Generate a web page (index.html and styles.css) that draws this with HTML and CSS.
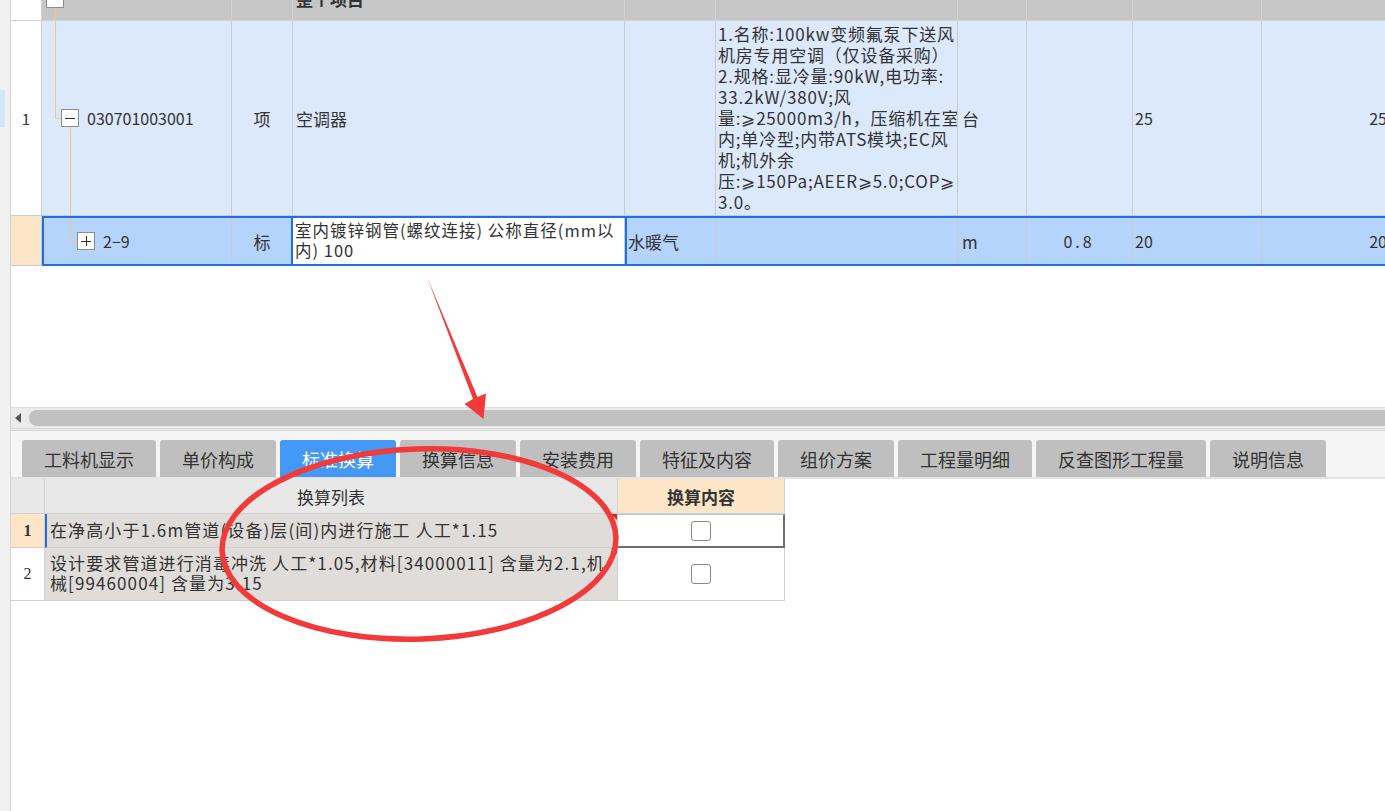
FILE: index.html
```html
<!DOCTYPE html>
<html lang="zh-CN">
<head>
    <meta charset="UTF-8">
    <meta name="viewport" content="width=device-width, initial-scale=1.0">
    <title>标准换算</title>
    <link rel="stylesheet" href="styles.css">
</head>
<body>
    <div class="side"><div class="side-mark"></div></div>

    <div class="main">
        <!-- 清单表格 -->
        <div class="sheet">
            <div class="row row-top">
                <div class="cell num"></div>
                <div class="cell code">
                    <span class="tbox minus"></span>
                </div>
                <div class="cell"></div>
                <div class="cell name bold">整个项目</div>
                <div class="cell"></div>
                <div class="cell"></div>
                <div class="cell"></div>
                <div class="cell"></div>
                <div class="cell"></div>
                <div class="cell"></div>
            </div>

            <div class="row row-item">
                <div class="cell num">1</div>
                <div class="cell code lvl1">
                    <span class="tbox minus"></span>
                    <span class="code-text">030701003001</span>
                </div>
                <div class="cell center">项</div>
                <div class="cell name">空调器</div>
                <div class="cell"></div>
                <div class="cell desc">
                    1.名称:100kw变频氟泵下送风<br>
                    机房专用空调（仅设备采购）<br>
                    2.规格:显冷量:90kW,电功率:<br>
                    33.2kW/380V;风<br>
                    量:⩾25000m3/h，压缩机在室<br>
                    内;单冷型;内带ATS模块;EC风<br>
                    机;机外余<br>
                    压:⩾150Pa;AEER⩾5.0;COP⩾<br>
                    3.0。
                </div>
                <div class="cell unit">台</div>
                <div class="cell"></div>
                <div class="cell numtext">25</div>
                <div class="cell numtext right">25</div>
            </div>

            <div class="row-sel">
                <div class="cell num peach"></div>
                <div class="sel">
                    <div class="cell code lvl2">
                        <span class="tbox plus"></span>
                        <span class="code-text">2−9</span>
                    </div>
                    <div class="cell center">标</div>
                    <div class="cell name editing">室内镀锌钢管(螺纹连接) 公称直径(mm以<br>内) 100</div>
                    <div class="cell">水暖气</div>
                    <div class="cell"></div>
                    <div class="cell unit">m</div>
                    <div class="cell numtext center spaced">0.8</div>
                    <div class="cell numtext">20</div>
                    <div class="cell numtext right">20</div>
                </div>
            </div>
        </div>

        <div class="hscroll">
            <span class="scroll-left"></span>
            <div class="thumb"></div>
        </div>

        <div class="tabs">
            <div class="tab">工料机显示</div>
            <div class="tab">单价构成</div>
            <div class="tab active">标准换算</div>
            <div class="tab">换算信息</div>
            <div class="tab">安装费用</div>
            <div class="tab">特征及内容</div>
            <div class="tab">组价方案</div>
            <div class="tab">工程量明细</div>
            <div class="tab">反查图形工程量</div>
            <div class="tab">说明信息</div>
        </div>

        <!-- 换算列表 -->
        <div class="sub">
            <div class="sub-row sub-head">
                <div class="scell snum"></div>
                <div class="scell stitle">换算列表</div>
                <div class="scell scontent">换算内容</div>
            </div>
            <div class="sub-row sr1">
                <div class="scell snum cur">1</div>
                <div class="scell stext curbar">在净高小于1.6m管道(设备)层(间)内进行施工 人工*1.15</div>
                <div class="scell scheck selected"><span class="chk"></span></div>
            </div>
            <div class="sub-row sr2">
                <div class="scell snum">2</div>
                <div class="scell stext">设计要求管道进行消毒冲洗 人工*1.05,材料[34000011] 含量为2.1,机<br>械[99460004] 含量为3.15</div>
                <div class="scell scheck"><span class="chk"></span></div>
            </div>
        </div>
    </div>

    <svg class="marks" width="1385" height="811" viewBox="0 0 1385 811">
        <polygon points="427,277 477.5,397 486,393.5 483.5,419 464.5,404 473,399" fill="#f23a3a"/>
        <ellipse cx="419" cy="544" rx="197" ry="95" fill="none" stroke="#f23a3a" stroke-width="5.5" transform="rotate(-2 419 544)"/>
    </svg>
</body>
</html>
```

FILE: styles.css
```css
* {
    box-sizing: border-box;
}

html, body {
    margin: 0;
}

body {
    width: 1385px;
    height: 811px;
    overflow: hidden;
    position: relative;
    display: flex;
    font-family: "Noto Sans CJK SC", "Microsoft YaHei", sans-serif;
    color: #333;
    background: #fff;
}

.side {
    width: 11px;
    flex: none;
    background: #f1f1f1;
    border-right: 1px solid #d4d4d4;
    padding-top: 90px;
}
.side-mark {
    width: 5px;
    height: 37px;
    background: #d2e6fb;
}

.main {
    flex: 1;
    min-width: 0;
}

/* top sheet */
.sheet {
    height: 407px;
    overflow: hidden;
}

.row {
    display: grid;
    grid-template-columns: 31px 190px 61px 332px 91px 242px 69px 106px 129px 140px;
}

.cell {
    display: flex;
    align-items: center;
    padding: 0 3px;
    font-size: 17px;
    white-space: nowrap;
    overflow: hidden;
    position: relative;
    border-right: 1px solid #c8ccd2;
    border-bottom: 1px solid #c8ccd2;
}

.row-top {
    height: 44px;
    margin-top: -23px;
    background: #c6c6c6;
}
.row-top .cell {
    border-color: #d3d3d3;
}
.row-top .num {
    background: #fff;
}
.bold {
    font-weight: bold;
}

.row-item {
    height: 195px;
    background: #dce9fc;
}
.num {
    background: #fff;
    justify-content: center;
    font-size: 15px;
}
.peach {
    background: #fde5c8;
}
.center {
    justify-content: center;
}
.unit {
    padding-left: 4px;
}
.numtext {
    font-size: 16px;
    padding-left: 2px;
}
.numtext.right {
    justify-content: flex-end;
    padding-right: 14px;
}
.numtext.center {
    justify-content: center;
}
.spaced {
    letter-spacing: 3px;
}

.desc {
    display: block;
    padding: 2px 2px;
    font-size: 17px;
    line-height: 21px;
    letter-spacing: 0.8px;
}

/* tree */
.tbox {
    width: 18px;
    height: 18px;
    flex: none;
    background: #fff;
    border: 1px solid #8d8d8d;
    position: relative;
}
.tbox::before {
    content: "";
    position: absolute;
    left: 3px;
    right: 3px;
    top: 7.5px;
    border-top: 1.5px solid #333;
}
.tbox.plus::after {
    content: "";
    position: absolute;
    top: 3px;
    bottom: 3px;
    left: 7.5px;
    border-left: 1.5px solid #333;
}

.code {
    padding-left: 4px;
    font-size: 16px;
}
.code-text {
    margin-left: 8px;
}
.row-top .code::after {
    content: "";
    position: absolute;
    left: 13px;
    top: 32px;
    bottom: 0;
    border-left: 1px solid #f5c47f;
}
.lvl1 {
    padding-left: 19px;
}
.lvl1::before {
    content: "";
    position: absolute;
    left: 13px;
    top: 0;
    height: 97px;
    width: 6px;
    border-left: 1px solid #f5c47f;
    border-bottom: 1px solid #f5c47f;
}
.lvl1::after {
    content: "";
    position: absolute;
    left: 28px;
    top: 106px;
    bottom: 0;
    border-left: 1px solid #f5c47f;
}
.lvl2 {
    padding-left: 33px;
}
.lvl2::before {
    content: "";
    position: absolute;
    left: 26px;
    top: 0;
    height: 23px;
    width: 7px;
    border-left: 1px solid #f5c47f;
    border-bottom: 1px solid #f5c47f;
}

/* selected row */
.row-sel {
    display: flex;
    height: 50px;
}
.row-sel > .num {
    width: 31px;
    flex: none;
}
.sel {
    flex: none;
    display: grid;
    grid-template-columns: 188px 61px 332px 91px 242px 69px 106px 129px 140px;
    background: #b5d4fb;
    border: 2px solid #1f6fe6;
    border-right: none;
}
.sel .cell {
    border-bottom: none;
}
.editing {
    display: block;
    background: #fff;
    line-height: 20px;
    padding: 2px 2px 0;
    outline: 2px solid #1f6fe6;
    font-size: 16.5px;
    letter-spacing: 1px;
}

/* horizontal scroll */
.hscroll {
    height: 24px;
    display: flex;
    align-items: center;
    gap: 8px;
    padding: 0 0 0 4px;
    background: #ebebeb;
    border-top: 1px solid #dcdcdc;
    border-bottom: 3px double #d8d8d8;
}
.scroll-left {
    width: 0;
    height: 0;
    border-top: 5px solid transparent;
    border-bottom: 5px solid transparent;
    border-right: 6px solid #555;
}
.thumb {
    flex: 1;
    height: 16px;
    background: #c1c1c1;
    border-radius: 8px 0 0 8px;
}

/* tabs */
.tabs {
    display: flex;
    gap: 4px;
    padding: 9px 0 0 11px;
    background: #f5f5f5;
    border-bottom: 2px solid #e4e4e4;
}
.tab {
    height: 37px;
    padding: 0 22px;
    display: flex;
    align-items: center;
    font-size: 18px;
    background: #bfbfbf;
    border-radius: 3px 3px 0 0;
    color: #333;
}
.tab.active {
    background: #4499f6;
    color: #fff;
}

/* sub table */
.sub {
    width: 774px;
}
.sub-row {
    display: grid;
    grid-template-columns: 34px 573px 167px;
}
.scell {
    display: flex;
    align-items: center;
    font-size: 17px;
    white-space: nowrap;
    overflow: hidden;
    position: relative;
    border-right: 1px solid #d0d0d0;
    border-bottom: 1px solid #d0d0d0;
}
.sub-head {
    height: 35px;
}
.sub-head .scell {
    background: #e8e8e8;
    justify-content: center;
}
.sub-head .scontent {
    background: #fde6c8;
    font-weight: bold;
}
.snum {
    justify-content: center;
    font-family: "Liberation Serif", "Noto Sans CJK SC", serif;
    font-size: 16px;
}
.snum.cur {
    background: #fde6c8;
    font-weight: bold;
}
.sr1 {
    height: 34px;
}
.sr2 {
    height: 53px;
}
.stext {
    display: block;
    background: #e0dcd9;
    padding: 5px 0 0 5px;
    line-height: 20px;
    letter-spacing: 1.1px;
}
.sr1 .stext {
    padding-top: 6px;
}
.stext::after {
    content: "";
    position: absolute;
    top: 0;
    right: 0;
    border-top: 6px solid #e52222;
    border-left: 6px solid transparent;
}
.curbar {
    border-left: 2px solid #1f6fe6;
    padding-left: 3px;
}
.scheck {
    justify-content: center;
    background: #fff;
}
.scheck.selected {
    border-top: 1px solid #a9c9f0;
    border-right: 2px solid #6e6e6e;
    border-bottom: 2px solid #6e6e6e;
}
.chk {
    width: 20px;
    height: 20px;
    border: 1px solid #8a8a8a;
    border-radius: 3px;
    background: #fff;
}

.marks {
    position: absolute;
    left: 0;
    top: 0;
    pointer-events: none;
}
```
